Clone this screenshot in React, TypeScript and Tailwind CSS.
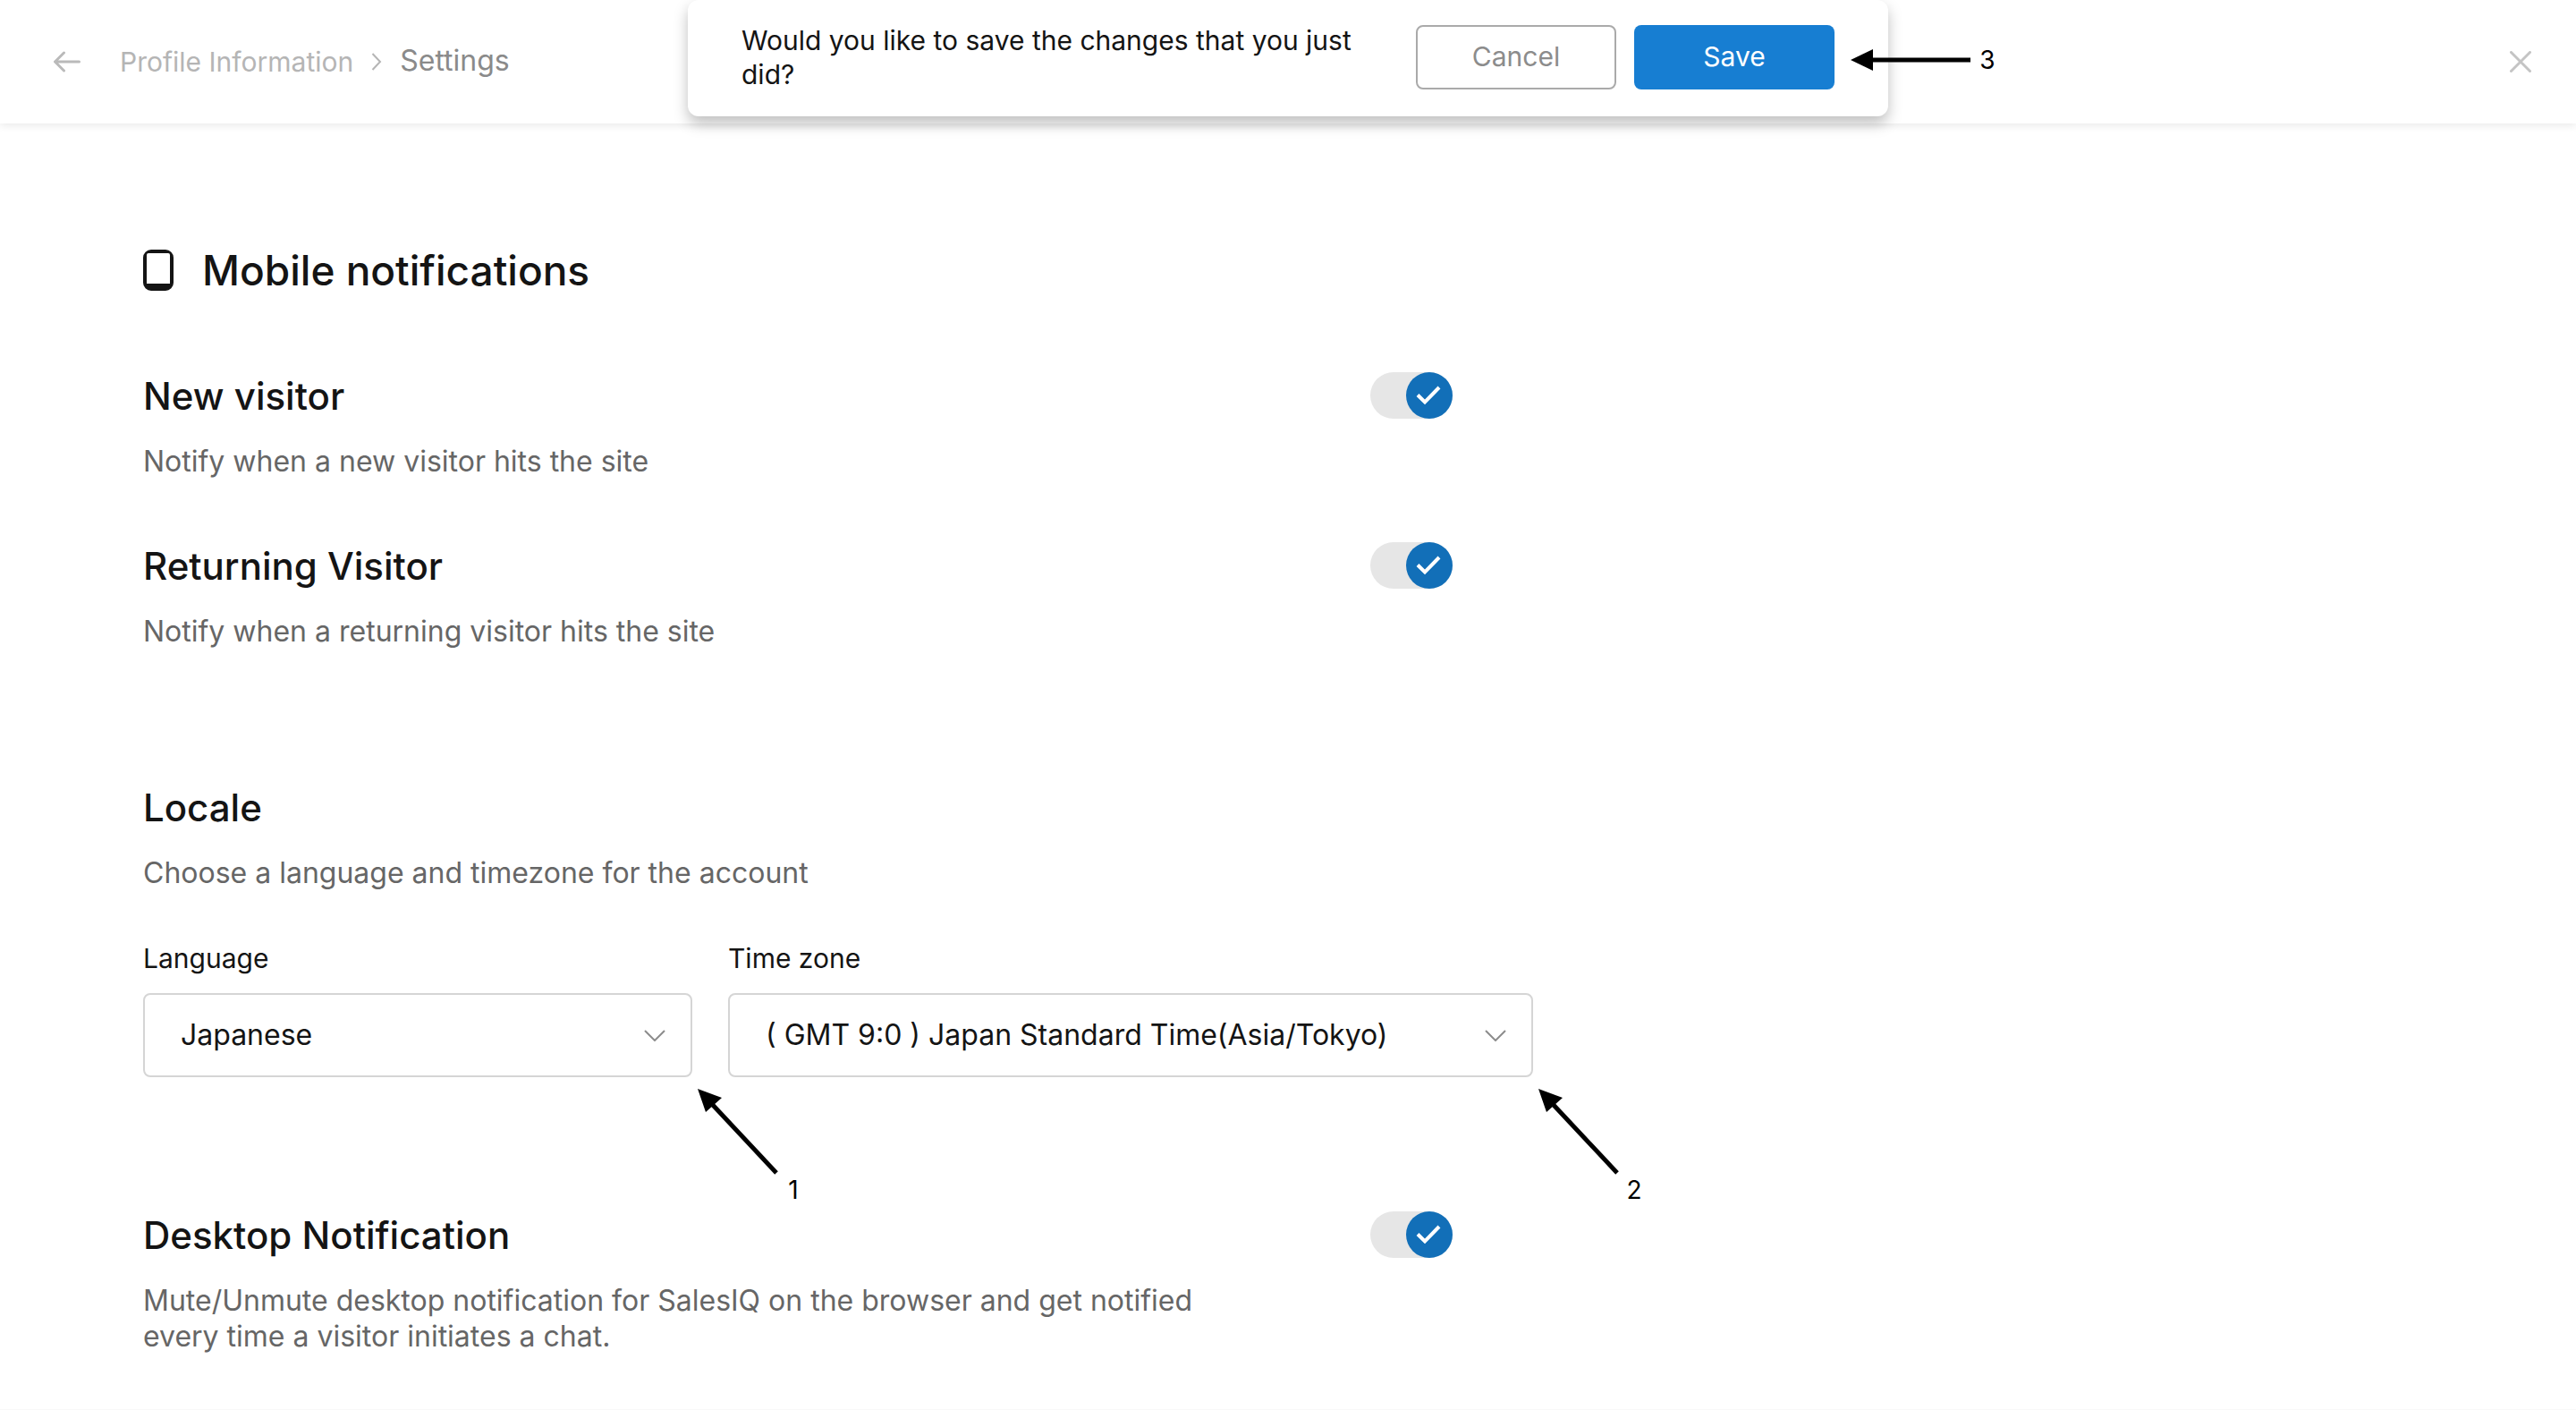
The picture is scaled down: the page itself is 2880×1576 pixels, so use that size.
/**
 * Settings page
 * -------------
 * Profile settings: notification switches, locale pickers and the
 * save / cancel prompt that drops over the header.
 */

import { useState } from "react";

const languages = ["Japanese", "English", "French", "German"];

const timeZones = [
  "( GMT 9:0 ) Japan Standard Time(Asia/Tokyo)",
  "( GMT 0:0 ) Greenwich Mean Time(Europe/London)",
];

type SettingRowProps = {
  id: string;
  title: string;
  description: string;
};

type SelectFieldProps = {
  id: string;
  label: string;
  options: string[];
  step: string;
  className: string;
};

function Toggle({ id }: { id: string }) {
  const [checked, setChecked] = useState(true);

  return (
    <span className="relative h-[52px] w-[92px] shrink-0">
      <input
        id={id}
        type="checkbox"
        checked={checked}
        onChange={() => setChecked(!checked)}
        className="peer block h-full w-full cursor-pointer appearance-none rounded-full bg-[#e6e6e6]"
      />
      <svg
        viewBox="0 0 52 52"
        className="pointer-events-none absolute top-0 left-0 size-[52px] rounded-full bg-gray-400 peer-checked:right-0 peer-checked:left-auto peer-checked:bg-[#126fb8]"
        fill="none"
        stroke="white"
        strokeWidth="4"
        aria-hidden="true"
      >
        <path d="M13 25.5l8 8L37 17" />
      </svg>
    </span>
  );
}

function SettingRow({ id, title, description }: SettingRowProps) {
  return (
    <section className="flex max-w-[1464px] items-start justify-between">
      <div className="max-w-[1240px]">
        <h3 className="text-[42px] leading-[54px] font-medium">
          <label htmlFor={id}>{title}</label>
        </h3>
        <p className="mt-[26px] text-[32px] leading-[40px] text-[#666]">
          {description}
        </p>
      </div>
      <Toggle id={id} />
    </section>
  );
}

/* Numbered arrow that points back up at the corner of a field */
function CornerMarker({ step }: { step: string }) {
  return (
    <div className="pointer-events-none absolute top-full left-full mt-3 ml-1.5 flex w-[116px] flex-col text-black">
      <svg viewBox="0 0 92 98" className="h-[98px] w-[92px]" aria-hidden="true">
        <path d="M15 17L88 95" stroke="currentColor" strokeWidth="5" />
        <path d="M0 1l27 10-9 8-9 8z" fill="currentColor" />
      </svg>
      <span className="w-[18px] self-end text-center text-[28px] leading-[32px]">
        {step}
      </span>
    </div>
  );
}

function SelectField({ id, label, options, step, className }: SelectFieldProps) {
  return (
    <div className={className}>
      <label htmlFor={id} className="block text-[30px] leading-[40px]">
        {label}
      </label>
      <div className="relative mt-[19px]">
        <select
          id={id}
          className="block h-[94px] w-full appearance-none rounded-lg border-2 border-[#d5d5d5] bg-white pr-20 pl-10 text-[32px]"
        >
          {options.map((option) => (
            <option key={option}>{option}</option>
          ))}
        </select>
        <svg
          viewBox="0 0 24 14"
          className="pointer-events-none absolute top-10 right-[30px] h-[14px] w-6"
          fill="none"
          stroke="#8c8c8c"
          strokeWidth="2"
          aria-hidden="true"
        >
          <path d="M1 2l11 11L23 2" />
        </svg>
        <CornerMarker step={step} />
      </div>
    </div>
  );
}

function SavePrompt() {
  return (
    <div className="absolute top-0 left-1/2 flex w-full max-w-[1342px] -translate-x-1/2 items-center justify-between rounded-xl bg-white px-[60px] pt-[26px] pb-7 shadow-[0_8px_16px_rgba(0,0,0,0.25)]">
      <p className="max-w-[720px] text-[30px] leading-[38px]">
        Would you like to save the changes that you just did?
      </p>
      <div className="flex gap-5 text-[30px]">
        <button
          type="button"
          className="h-[72px] w-[224px] rounded-lg border-2 border-[#aaa] pb-0.5 text-[#8c8c8c]"
        >
          Cancel
        </button>
        <button
          type="button"
          className="h-[72px] w-[224px] rounded-lg bg-[#177ed2] pb-0.5 text-white"
        >
          Save
        </button>
      </div>
      <div className="pointer-events-none absolute top-[48px] right-0 flex translate-x-[120px] items-center gap-2.5 text-black">
        <svg viewBox="0 0 134 26" className="h-[26px] w-[134px]" aria-hidden="true">
          <path d="M20 13h114" stroke="currentColor" strokeWidth="5" />
          <path d="M0 13L25 1v24z" fill="currentColor" />
        </svg>
        <span className="w-[18px] text-center text-[28px] leading-[38px]">
          3
        </span>
      </div>
    </div>
  );
}

function Header() {
  return (
    <header className="relative flex h-[138px] items-center bg-white px-[50px] shadow-[0_3px_8px_rgba(0,0,0,0.08)]">
      <button type="button" aria-label="Back" className="px-2.5">
        <svg
          viewBox="0 0 30 24"
          className="h-6 w-[30px]"
          fill="none"
          stroke="#bababa"
          strokeWidth="3"
          strokeLinecap="round"
          strokeLinejoin="round"
        >
          <path d="M28.5 12H2M11.5 2L1.5 12l10 10" />
        </svg>
      </button>
      <nav aria-label="Breadcrumb" className="ml-[34px] flex items-center">
        <a href="#profile" className="text-[30px] text-[#b5b5b5]">
          Profile Information
        </a>
        <svg
          viewBox="0 0 12 20"
          className="mx-5 h-5 w-3"
          fill="none"
          stroke="#b5b5b5"
          strokeWidth="2"
          aria-hidden="true"
        >
          <path d="M1.5 1L10 10l-8.5 9" />
        </svg>
        <span className="pb-0.5 text-[32px] text-[#8a8a8a]">Settings</span>
      </nav>
      <button type="button" aria-label="Close" className="ml-auto">
        <svg
          viewBox="0 0 24 24"
          className="size-6"
          fill="none"
          stroke="#c4c4c4"
          strokeWidth="3"
          strokeLinecap="round"
        >
          <path d="M1.5 1.5l21 21M22.5 1.5l-21 21" />
        </svg>
      </button>
      <SavePrompt />
    </header>
  );
}

export default function App() {
  return (
    <div className="min-h-screen border-b border-[#f8f8f8] bg-white font-['Inter',sans-serif] text-[#141414]">
      <Header />

      <main className="px-40 pt-[136px] pb-14">
        <div className="flex items-center gap-8">
          <svg viewBox="0 0 34 46" className="h-[46px] w-[34px]" aria-hidden="true">
            <path
              fillRule="evenodd"
              fill="currentColor"
              d="M9 0h16a9 9 0 0 1 9 9v28a9 9 0 0 1-9 9H9a9 9 0 0 1-9-9V9a9 9 0 0 1 9-9zM6 4a2 2 0 0 0-2 2v32h26V6a2 2 0 0 0-2-2z"
            />
          </svg>
          <h2 className="text-[46px] leading-[56px] font-medium">
            Mobile notifications
          </h2>
        </div>

        <div className="mt-[86px] grid gap-[70px]">
          <SettingRow
            id="new-visitor"
            title="New visitor"
            description="Notify when a new visitor hits the site"
          />
          <SettingRow
            id="returning-visitor"
            title="Returning Visitor"
            description="Notify when a returning visitor hits the site"
          />
        </div>

        <section className="mt-[150px]">
          <h3 className="text-[42px] leading-[54px] font-medium">Locale</h3>
          <p className="mt-[26px] text-[32px] leading-[40px] text-[#666]">
            Choose a language and timezone for the account
          </p>
          <div className="mt-[55px] flex gap-10">
            <SelectField
              id="language"
              label="Language"
              options={languages}
              step="1"
              className="w-[614px]"
            />
            <SelectField
              id="time-zone"
              label="Time zone"
              options={timeZones}
              step="2"
              className="w-[900px]"
            />
          </div>
        </section>

        <div className="mt-[150px]">
          <SettingRow
            id="desktop-notification"
            title="Desktop Notification"
            description="Mute/Unmute desktop notification for SalesIQ on the browser and get notified every time a visitor initiates a chat."
          />
        </div>
      </main>
    </div>
  );
}
